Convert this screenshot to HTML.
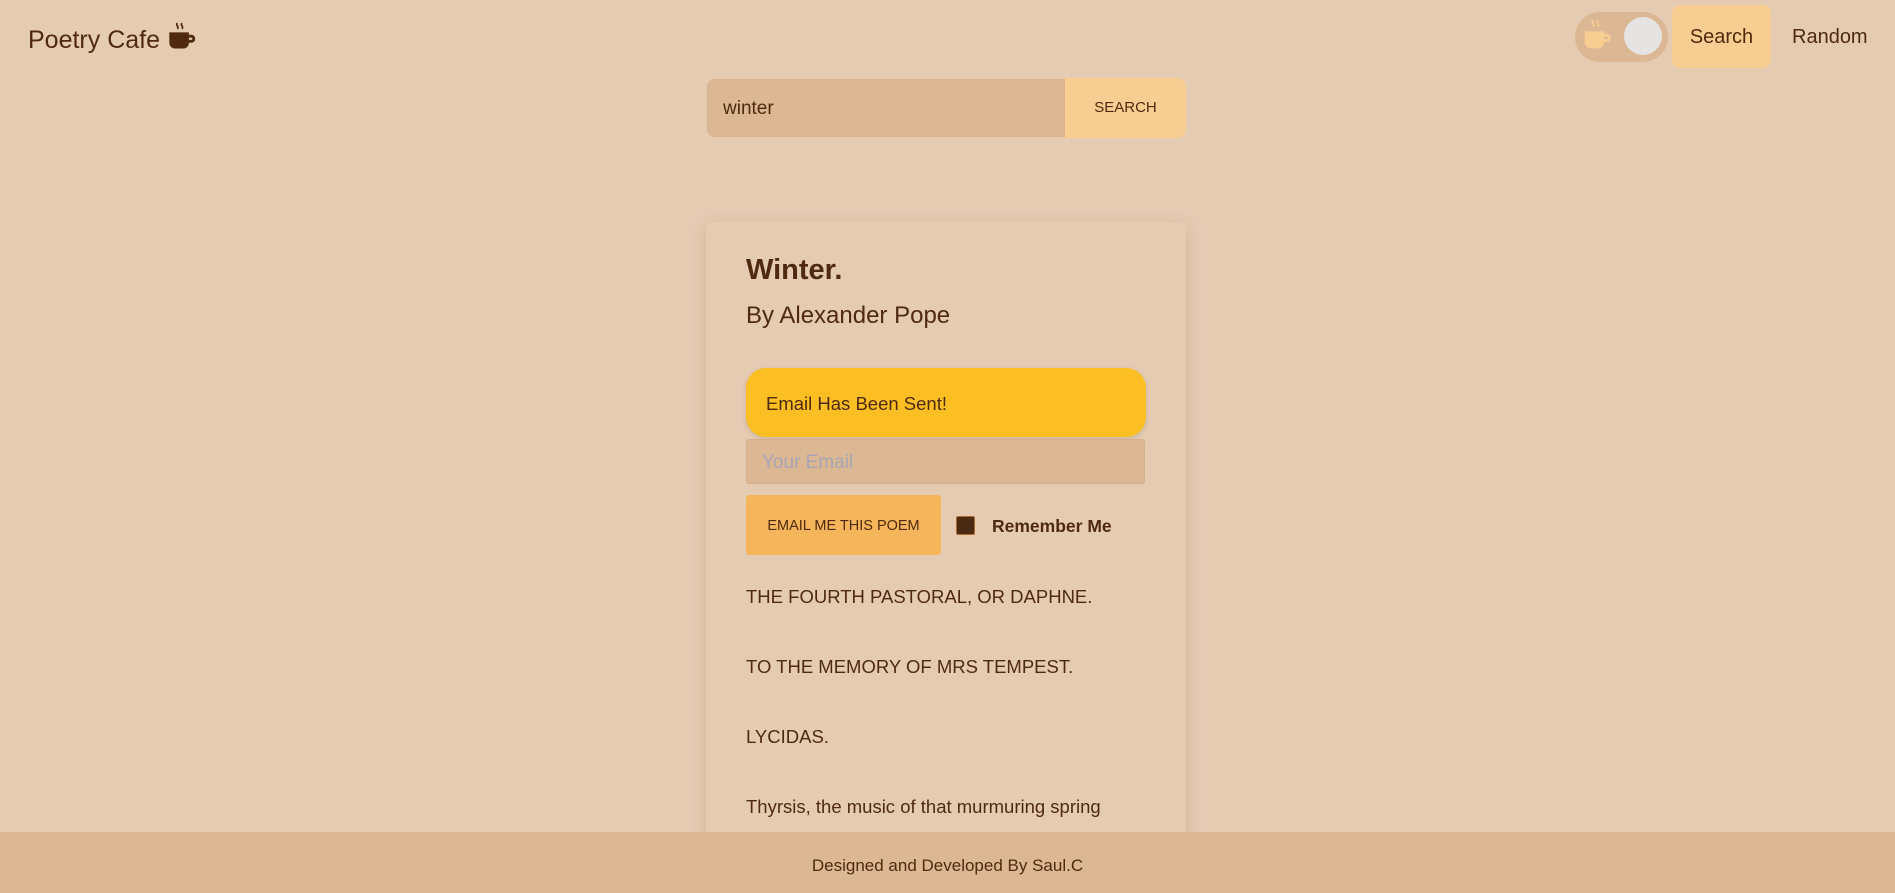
<!DOCTYPE html>
<html style="overflow:hidden;width:1895px;height:893px"><head><meta charset="utf-8"><style>
*{box-sizing:border-box;margin:0;padding:0}
body{width:1895px;height:893px;overflow:hidden;background:#e5cbb2;font-family:"Liberation Sans",sans-serif;color:#4f2a0e;position:relative}
.abs{position:absolute}
.logo{left:28px;top:22px;font-size:25px;color:#4f2a0e;white-space:nowrap}
.toggle{left:1575px;top:12px;width:93px;height:50px;border-radius:25px;background:#dbb793}
.knob{left:1624px;top:17px;width:38px;height:38px;border-radius:50%;background:#e6e3e3}
.sbtn{left:1672px;top:5px;width:99px;height:63px;border-radius:8px;background:#f8cd92;font-size:20px;line-height:65px;text-align:center}
.rand{left:1792px;top:5px;line-height:65px;font-size:20px}
.sin{left:707px;top:79px;width:358px;height:58px;background:#dbb793;border-radius:8px 0 0 8px;font-size:19px;line-height:58px;padding-left:15px;border:1px solid #d8b38e}
.sgo{left:1065px;top:78px;width:121px;height:60px;background:#f8cd92;border-radius:0 8px 8px 0;font-size:15px;line-height:60px;text-align:center}
.card{left:706px;top:222px;width:480px;height:620px;background:#e5cbb2;box-shadow:0 4px 16px rgba(120,80,40,.18);border-radius:6px}
.title{left:746px;top:254px;font-size:29px;font-weight:bold}
.by{left:746px;top:302px;font-size:24px}
.alert{left:746px;top:368px;width:400px;height:69px;border-radius:20px;background:#fbbf24;font-size:18.5px;line-height:71px;padding-left:20px;box-shadow:0 2px 6px rgba(0,0,0,.12)}
.email{left:746px;top:439px;width:399px;height:45px;background:#dbb793;border:1px solid #d4b08c;border-radius:3px;font-size:19px;line-height:45px;padding-left:15px;color:#a8a6b4}
.ebtn{left:746px;top:495px;width:195px;height:60px;background:#f5b55a;border-radius:3px;font-size:14.5px;line-height:62px;text-align:center}
.chk{left:956px;top:516px;width:19px;height:19px;background:#4a2a10;border:1px solid #b06a30;border-radius:2px}
.rem{left:992px;top:516px;font-size:17.5px;font-weight:bold}
.line{left:746px;font-size:18.5px}
.foot{left:0;top:832px;width:1895px;height:61px;background:#dbb793;font-size:17px;line-height:68px;text-align:center;z-index:2}
</style></head><body>
<div class="abs logo">Poetry Cafe <svg width="30" height="30" viewBox="0 0 26 26" style="vertical-align:-4px"><path d="M9 1c-2 2 2 3 0 5M13 1c-2 2 2 3 0 5" stroke="#4f2a0e" stroke-width="1.5" fill="none"/><path d="M2 9h17v9a5 5 0 0 1-5 5H7a5 5 0 0 1-5-5z" fill="#4f2a0e"/><path d="M19 11h2a3.5 3.5 0 0 1 0 7h-2v-2.5h2a1 1 0 0 0 0-2h-2z" fill="#4f2a0e"/></svg></div>
<div class="abs toggle"></div>
<svg class="abs" style="left:1582px;top:18px" width="32" height="34" viewBox="0 0 26 28"><path d="M9 2c-2 2 2 3 0 5M13 2c-2 2 2 3 0 5" stroke="#f8cd92" stroke-width="1.5" fill="none"/><path d="M2 11h16v9a5 5 0 0 1-5 5H7a5 5 0 0 1-5-5z" fill="#f8cd92"/><path d="M18 13h2a3.5 3.5 0 0 1 0 7h-2v-2.5h2a1 1 0 0 0 0-2h-2z" fill="#f8cd92"/></svg>
<div class="abs knob"></div>
<div class="abs sbtn">Search</div>
<div class="abs rand">Random</div>
<div class="abs sin">winter</div>
<div class="abs sgo">SEARCH</div>
<div class="abs card"></div>
<div class="abs title">Winter.</div>
<div class="abs by">By Alexander Pope</div>
<div class="abs alert">Email Has Been Sent!</div>
<div class="abs email">Your Email</div>
<div class="abs ebtn">EMAIL ME THIS POEM</div>
<div class="abs chk"></div>
<div class="abs rem">Remember Me</div>
<div class="abs line" style="top:586px">THE FOURTH PASTORAL, OR DAPHNE.</div>
<div class="abs line" style="top:656px">TO THE MEMORY OF MRS TEMPEST.</div>
<div class="abs line" style="top:726px">LYCIDAS.</div>
<div class="abs line" style="top:796px">Thyrsis, the music of that murmuring spring</div>
<div class="abs foot">Designed and Developed By Saul.C</div>
</body></html>
